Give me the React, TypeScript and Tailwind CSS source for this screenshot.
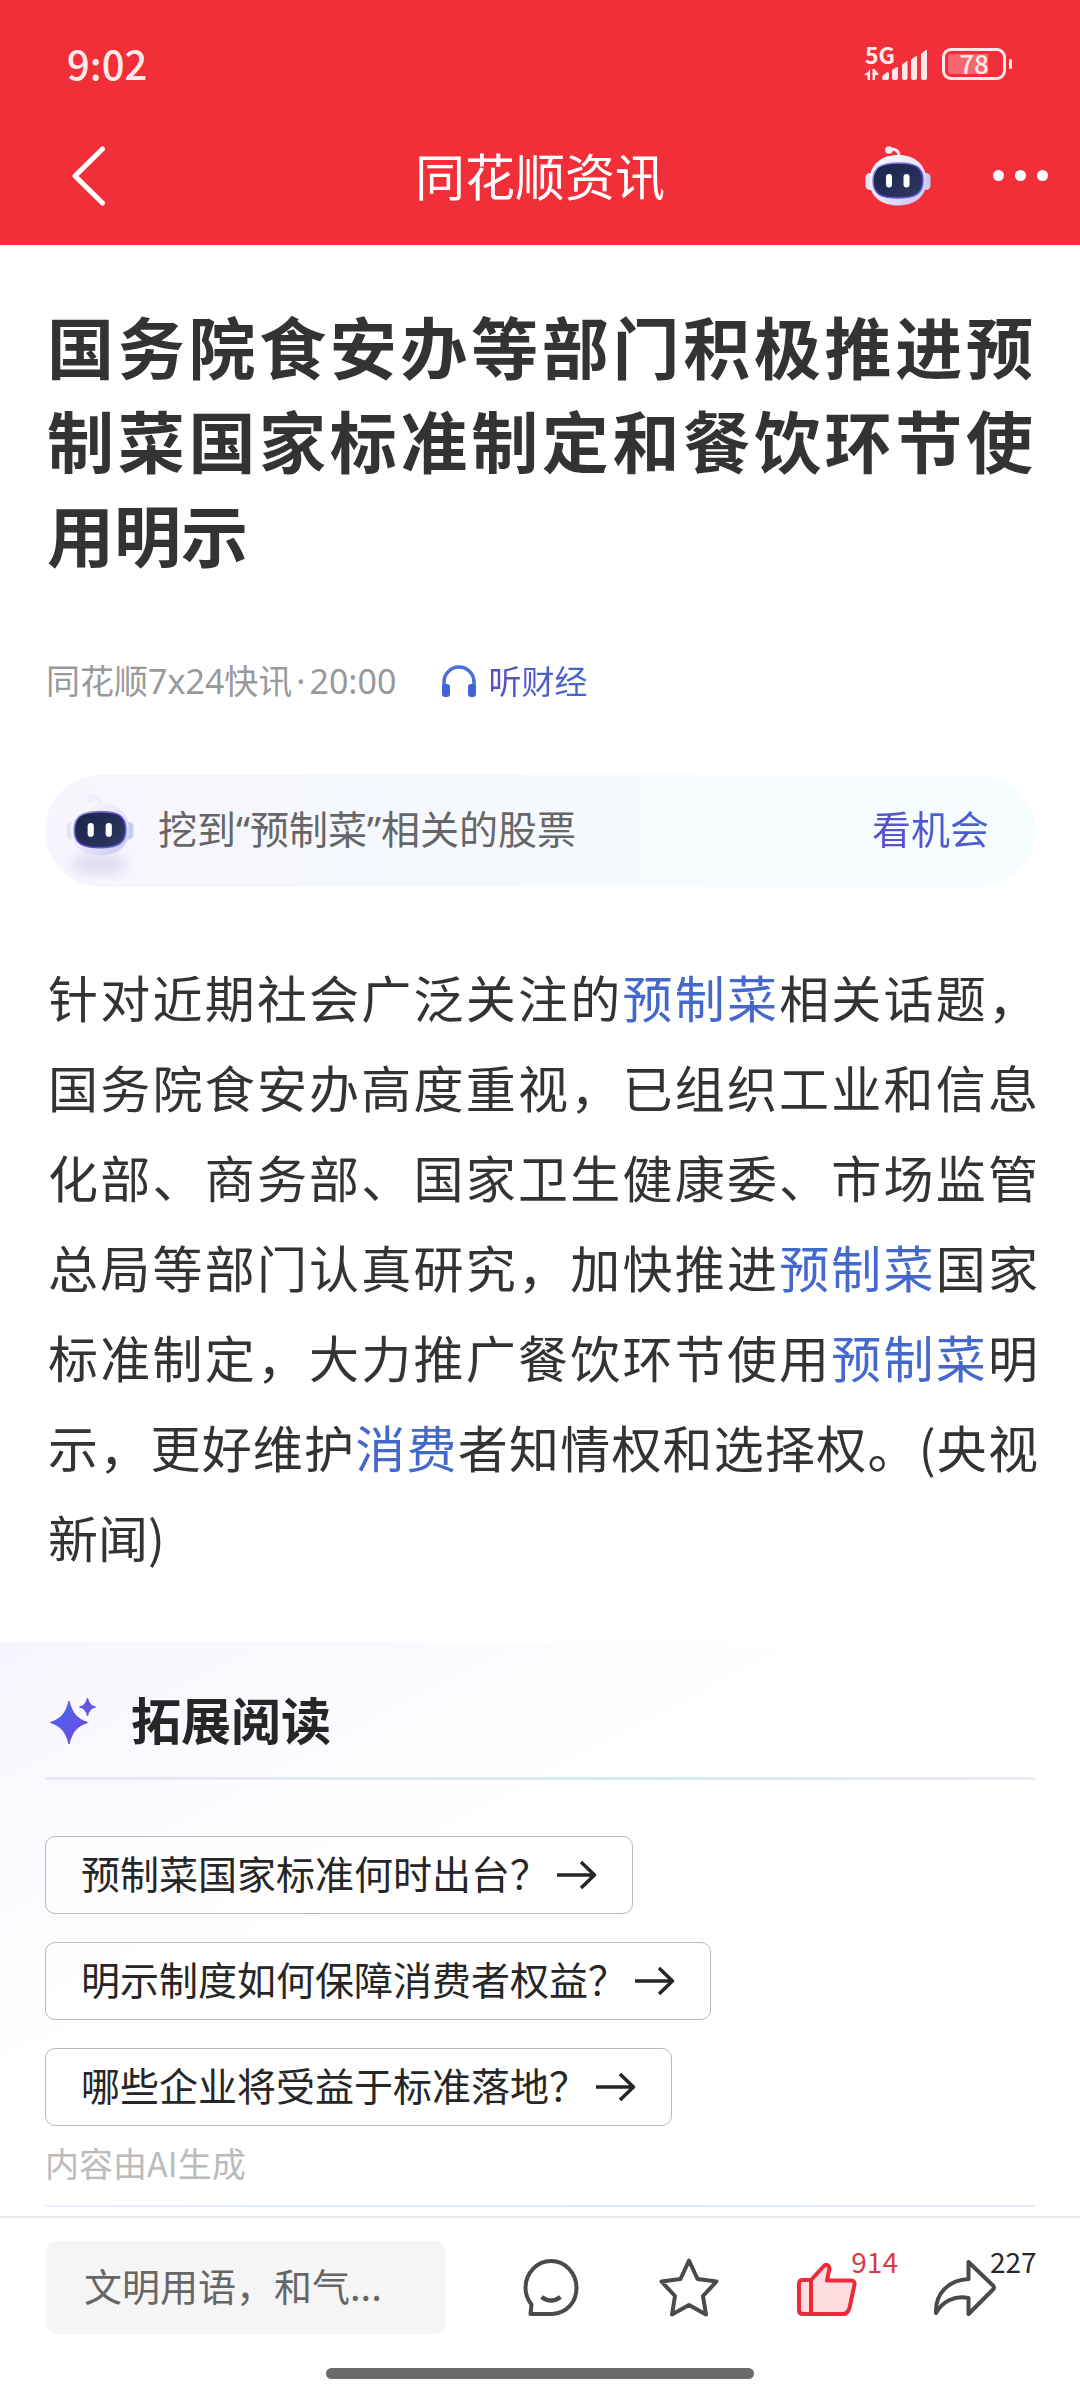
import React, { useId } from "react";

function Robot({ className }: { className: string }) {
  const id = useId();
  const shell = `${id}-shell`;
  const visor = `${id}-visor`;
  const rim = `${id}-rim`;
  return (
    <svg viewBox="0 0 66 60" className={className} aria-hidden="true">
      <defs>
        <linearGradient id={shell} x1="0" y1="0" x2="1" y2="1">
          <stop offset="0" stopColor="#ffffff" />
          <stop offset="0.5" stopColor="#e9e7fb" />
          <stop offset="1" stopColor="#c3c3f3" />
        </linearGradient>
        <linearGradient id={visor} x1="0" y1="0" x2="1" y2="1">
          <stop offset="0" stopColor="#1b2347" />
          <stop offset="0.5" stopColor="#232d58" />
          <stop offset="1" stopColor="#353a5e" />
        </linearGradient>
        <linearGradient id={rim} x1="0" y1="0" x2="1" y2="1">
          <stop offset="0" stopColor="#9fb0ee" />
          <stop offset="0.5" stopColor="#6a3fd0" />
          <stop offset="1" stopColor="#5a6ff0" />
        </linearGradient>
      </defs>
      <path d="M25 3.500c5-1 9 1 9 6.500" fill="none" stroke="#f1e9fa" strokeWidth="3" strokeLinecap="round" />
      <circle cx="24" cy="4" r="3.800" fill="#f3ecfb" />
      <rect x="0.500" y="27" width="9" height="17" rx="4.500" fill="#e2e2f8" />
      <rect x="56.500" y="27" width="9" height="17" rx="4.500" fill="#c6caf2" />
      <path d="M33 9C50 9 61.500 19 61.500 35S49 59.500 33 59.500 4.500 51 4.500 35 16 9 33 9Z" fill={`url(#${shell})`} />
      <path d="M33 17C50 17 58 21 58 34.500S50 52 33 52 8 48 8 34.500 16 17 33 17Z" fill={`url(#${visor})`} stroke={`url(#${rim})`} strokeWidth="1.500" />
      <rect x="21" y="28" width="6" height="13.500" rx="3" fill="#fff" />
      <rect x="38.500" y="28" width="6" height="13.500" rx="3" fill="#fff" />
    </svg>
  );
}

function StatusBar() {
  return (
    <div className="flex h-[106px] items-end justify-between pr-[68px] pb-5 pl-[67px] text-[#ffe9ea]">
      <span className="pb-[3px] text-[40px] leading-[40px] font-medium">9:02</span>
      <div className="flex items-end gap-[14px] pb-[6px]">
        <div className="flex flex-col">
          <span className="pl-[1px] text-[23px] leading-[16px] font-bold">5G</span>
          <svg viewBox="0 0 64 18" className="h-[18px] w-[64px] overflow-visible" fill="currentColor" aria-hidden="true">
            <path d="M6 7v11h-2.500v-4.500L0 12.500 4 10ZM8.500 18V7h2l4.500 5.500-4 1V18Z" />
            <path d="M18 16q0-1.500 1-2.500l4-3.500q2 0 2 2v4q0 2-2 2h-3q-2 0-2-2ZM28 8q4-3 6-3v11q0 2-2 2h-2q-2 0-2-2ZM38 3q4-4 5.500-4v17q0 2-2 2H40q-2 0-2-2ZM47-2q4-4 6-4v22q0 2-2 2h-2q-2 0-2-2ZM57-8q4-4 6-4v28q0 2-2 2h-2q-2 0-2-2Z" />
          </svg>
        </div>
        <div className="flex items-center gap-[3px]">
          <div className="flex h-8 w-[64px] items-center justify-center rounded-[9px] border-[3px] border-current bg-linear-to-r from-[#f6666c] from-75% to-transparent to-75% bg-clip-content p-[3px]">
            <span className="pb-[2px] text-[26px] leading-[20px] font-medium">78</span>
          </div>
          <span className="h-[10px] w-[3px] rounded-full bg-current" />
        </div>
      </div>
    </div>
  );
}

function NavBar() {
  return (
    <nav className="grid h-[139px] grid-cols-[1fr_auto_1fr] items-center text-white">
      <button aria-label="返回" className="ml-[68px] h-[64px] w-10 justify-self-start">
        <svg viewBox="0 0 40 64" className="h-16 w-10" fill="none" stroke="currentColor" strokeWidth="5" strokeLinecap="round" strokeLinejoin="round" aria-hidden="true">
          <path d="M34.500 5 7 32l27.500 27" />
        </svg>
      </button>
      <h1 className="pb-1 text-[50px] leading-[60px]">同花顺资讯</h1>
      <div className="flex items-center justify-end gap-[62px] pr-8">
        <button aria-label="智能助手">
          <Robot className="h-[60px] w-[66px]" />
        </button>
        <button aria-label="更多" className="flex gap-[11px]">
          <span className="size-[11px] rounded-full bg-white" />
          <span className="size-[11px] rounded-full bg-white" />
          <span className="size-[11px] rounded-full bg-white" />
        </button>
      </div>
    </nav>
  );
}

function Keyword({ children }: { children: string }) {
  return (
    <a href="#" className="text-[#4468cb]">
      {children}
    </a>
  );
}

function Question({ children }: { children: string }) {
  return (
    <button className="flex h-[78px] items-center gap-2 rounded-[10px] border border-[#b9b9bd] bg-white/50 px-[35px] text-[39px] leading-[48px] text-[#262626]">
      <span className="pb-[6px]">{children}</span>
      <svg viewBox="0 0 40 30" className="h-[30px] w-10" fill="none" stroke="currentColor" strokeWidth="3.500" aria-hidden="true">
        <path d="M0 15h37M24 2l13.500 13L24 28" strokeLinejoin="round" />
      </svg>
    </button>
  );
}

const iconProps = {
  viewBox: "0 0 64 64",
  className: "size-[64px]",
  fill: "none",
  stroke: "currentColor",
  strokeWidth: 4,
  strokeLinecap: "round" as const,
  strokeLinejoin: "round" as const,
  "aria-hidden": true,
};

function ActionBar() {
  return (
    <footer className="mt-auto border-t-2 border-[#e9e9e9] bg-white">
      <div className="flex items-center justify-between pt-[23px] pr-[43px] pl-[46px] text-[#4a4a4a]">
        <input
          aria-label="评论"
          placeholder="文明用语，和气..."
          className="h-[93px] w-[400px] rounded-[11px] bg-[#f5f5f5] px-[38px] pb-[6px] text-[38px] text-[#666] outline-none placeholder:text-[#666]"
        />
        <div className="flex w-[518px] items-center justify-between">
          <button aria-label="查看评论">
            <svg {...iconProps}>
              <path d="M11.500 58H33C48 57 57.500 46 57.500 32 57.500 17 46 5 32 5S6.500 17 6.500 32c0 7 2.500 12 6 16.500Z" />
              <path d="M22.500 41q9.500 7 19 0" strokeLinecap="butt" strokeWidth="4.500" />
            </svg>
          </button>
          <button aria-label="收藏">
            <svg {...iconProps}>
              <path d="m32 4.500 8.500 18.500 19 2.500L46 40l3 18.500L32 49l-17 9.500L18 40 4.500 25.500l19-2.500Z" />
            </svg>
          </button>
          <button aria-label="点赞 914" className="relative text-[#eb2b3a]">
            <svg {...iconProps}>
              <path d="M8 24h9L29 11q3-4 5.500-1 1.500 2 .5 5l-2 9.500h24q4 0 3.500 4l-5 23.500q-2 6-6 6H9q-4 0-4-4V28q0-4 3-4ZM17 24v34" fill="#ffdce0" />
            </svg>
            <span className="absolute -top-[11px] left-[57px] text-[28px] leading-[32px] text-[#d93a47]">914</span>
          </button>
          <button aria-label="分享 227" className="relative mr-[41px]">
            <svg {...iconProps}>
              <path d="M36.500 6 61 29.500q2 2 0 4L36.500 58V42C22 39 10 46 4 57 3 37 17 24 36.500 23Z" />
            </svg>
            <span className="absolute -top-[11px] left-[58px] text-[28px] leading-[32px] text-[#262626]">227</span>
          </button>
        </div>
      </div>
      <div className="mx-auto mt-[34px] mb-[21px] h-[11px] w-[428px] rounded-full bg-[#6a6a6a]" />
    </footer>
  );
}

export default function App() {
  return (
    <div className="flex min-h-screen flex-col bg-white font-['Noto_Sans_CJK_SC',sans-serif] text-[#333]">
      <header className="bg-[#f12f38]">
        <StatusBar />
        <NavBar />
      </header>

      <main>
        <article className="px-[45px] pt-[53px]">
          <h2 className="px-[2px] text-justify text-[67px] leading-[94px] font-bold">
            国务院食安办等部门积极推进预制菜国家标准制定和餐饮环节使用明示
          </h2>

          <div className="mt-[70px] flex items-center text-[33px] leading-[60px]">
            <span className="pl-[1px] font-['Noto_Sans','Noto_Sans_CJK_SC',sans-serif] text-[34px] text-[#999]">
              同花顺7x24快讯<span className="mx-1">·</span>20:00
            </span>
            <a href="#" className="ml-[45px] flex items-center gap-[11px] text-[#4d58cb]">
              <svg viewBox="0 0 36 34" className="h-[34px] w-9" fill="none" aria-hidden="true">
                <path d="M3 28V18a15 15 0 0 1 30 0v10" stroke="#4a6fd6" strokeWidth="3.500" />
                <rect x="1" y="20" width="8" height="13" rx="3" fill="#3f63d8" />
                <rect x="27" y="20" width="8" height="13" rx="3" fill="#3f63d8" />
              </svg>
              <span className="bg-linear-to-r from-[#5a4cc9] to-[#4169cd] bg-clip-text pb-[2px] text-transparent">听财经</span>
            </a>
          </div>

          <div className="mt-[63px] flex h-28 items-center rounded-full bg-linear-to-r from-[#f8f4fd] via-[#f5f8fe] via-30% to-[#f6fdff] pr-[46px] pl-[21px] text-[39px]">
            <div className="relative pb-3">
              <div className="absolute top-[62px] left-2 h-[18px] w-[50px] rounded-full bg-[#dcdcf0] blur-[6px]" />
              <Robot className="relative h-[64px] w-[68px]" />
            </div>
            <span className="ml-6 pb-1 font-['Noto_Sans','Noto_Sans_CJK_SC',sans-serif] text-[#666]">挖到“预制菜”相关的股票</span>
            <a href="#" className="ml-auto bg-linear-to-tr from-[#6148cd] to-[#3b68d2] bg-clip-text pb-2 text-transparent">
              看机会
            </a>
          </div>

          <p className="-mr-[3px] mt-[64px] pl-[3px] text-justify text-[50px] leading-[90px]">
            针对近期社会广泛关注的<Keyword>预制菜</Keyword>相关话题，国务院食安办高度重视，已组织工业和信息化部、商务部、国家卫生健康委、市场监管总局等部门认真研究，加快推进<Keyword>预制菜</Keyword>国家标准制定，大力推广餐饮环节使用<Keyword>预制菜</Keyword>明示，更好维护<Keyword>消费</Keyword>者知情权和选择权。(央视新闻)
          </p>
        </article>

        <section className="mt-[61px] bg-linear-to-br from-[#f8f4fe] to-white to-40% px-[45px] pt-[46px]">
          <h3 className="flex items-center gap-[35px] text-[50px] leading-[60px] font-bold text-[#262626]">
            <svg viewBox="0 0 46 46" className="ml-[5px] size-[46px]" aria-hidden="true">
              <defs>
                <linearGradient id="spark" x1="0" y1="0" x2="1" y2="1">
                  <stop offset="0" stopColor="#3f6bf0" />
                  <stop offset="1" stopColor="#7545dc" />
                </linearGradient>
              </defs>
              <path d="M19 3c3 12 8 18 18.500 21.500C27 28 22 34 19 46 16 34 11 28 .5 24.500 11 21 16 15 19 3Z" fill="url(#spark)" stroke="url(#spark)" strokeLinejoin="round" />
              <path d="M37.500 0q1.500 7.500 8 9-6.500 1.500-8 9-1.500-7.500-8-9 6.500-1.500 8-9Z" fill="#6254dd" stroke="#6254dd" strokeLinejoin="round" />
            </svg>
            <span className="pb-[6px]">拓展阅读</span>
          </h3>
          <div className="mt-[23px] h-[3px] bg-linear-to-r from-[#ebe8f6] via-[#d3eaf7] via-60% to-[#f0e8f6]" />
          <div className="mt-14 flex flex-col items-start gap-7">
            <Question>预制菜国家标准何时出台？</Question>
            <Question>明示制度如何保障消费者权益？</Question>
            <Question>哪些企业将受益于标准落地？</Question>
          </div>
          <p className="mt-[12px] text-[34px] leading-[50px] text-[#bbb]">内容由AI生成</p>
          <div className="mt-[17px] h-[2px] bg-linear-to-r from-[#ecf0fa] via-[#d6ecf7] via-60% to-[#f0e6f8]" />
        </section>
      </main>

      <ActionBar />
    </div>
  );
}
